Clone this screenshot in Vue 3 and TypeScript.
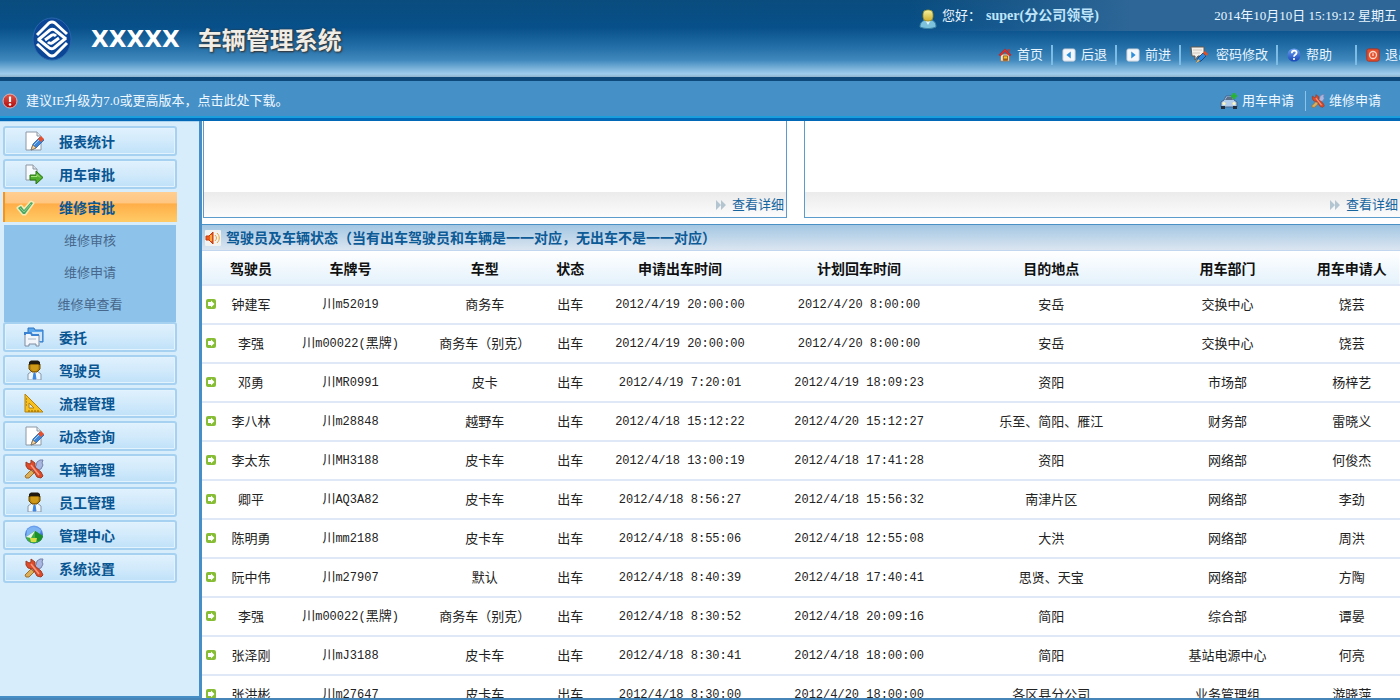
<script setup lang="ts">
interface MenuItem {
  label: string
  icon: string
  children?: string[]
}

const menu: MenuItem[] = [
  { label: '报表统计', icon: 'note' },
  { label: '用车审批', icon: 'export' },
  { label: '维修审批', icon: 'check', children: ['维修审核', '维修申请', '维修单查看'] },
  { label: '委托', icon: 'folders' },
  { label: '驾驶员', icon: 'person' },
  { label: '流程管理', icon: 'ruler' },
  { label: '动态查询', icon: 'note' },
  { label: '车辆管理', icon: 'tools' },
  { label: '员工管理', icon: 'person' },
  { label: '管理中心', icon: 'globe' },
  { label: '系统设置', icon: 'tools' },
]

const nav = [
  { label: '首页', icon: 'home' },
  { label: '后退', icon: 'back' },
  { label: '前进', icon: 'forward' },
  { label: '密码修改', icon: 'password', kind: 'wide' },
  { label: '帮助', icon: 'help', kind: 'spaced' },
  { label: '退出', icon: 'exit' },
]

const columns = ['驾驶员', '车牌号', '车型', '状态', '申请出车时间', '计划回车时间', '目的地点', '用车部门', '用车申请人']

const rows: string[][] = [
  ['钟建军', '川m52019', '商务车', '出车', '2012/4/19 20:00:00', '2012/4/20 8:00:00', '安岳', '交换中心', '饶芸'],
  ['李强', '川m00022(黑牌)', '商务车（别克）', '出车', '2012/4/19 20:00:00', '2012/4/20 8:00:00', '安岳', '交换中心', '饶芸'],
  ['邓勇', '川MR0991', '皮卡', '出车', '2012/4/19 7:20:01', '2012/4/19 18:09:23', '资阳', '市场部', '杨梓艺'],
  ['李八林', '川m28848', '越野车', '出车', '2012/4/18 15:12:22', '2012/4/20 15:12:27', '乐至、简阳、雁江', '财务部', '雷晓义'],
  ['李太东', '川MH3188', '皮卡车', '出车', '2012/4/18 13:00:19', '2012/4/18 17:41:28', '资阳', '网络部', '何俊杰'],
  ['卿平', '川AQ3A82', '皮卡车', '出车', '2012/4/18 8:56:27', '2012/4/18 15:56:32', '南津片区', '网络部', '李劲'],
  ['陈明勇', '川mm2188', '皮卡车', '出车', '2012/4/18 8:55:06', '2012/4/18 12:55:08', '大洪', '网络部', '周洪'],
  ['阮中伟', '川m27907', '默认', '出车', '2012/4/18 8:40:39', '2012/4/18 17:40:41', '思贤、天宝', '网络部', '方陶'],
  ['李强', '川m00022(黑牌)', '商务车（别克）', '出车', '2012/4/18 8:30:52', '2012/4/18 20:09:16', '简阳', '综合部', '谭晏'],
  ['张泽刚', '川mJ3188', '皮卡车', '出车', '2012/4/18 8:30:41', '2012/4/18 18:00:00', '简阳', '基站电源中心', '何亮'],
  ['张洪彬', '川m27647', '皮卡车', '出车', '2012/4/18 8:30:00', '2012/4/20 18:00:00', '各区县分公司', '业务管理组', '游晓萍'],
]

// Splits a value into Latin and Chinese runs so each gets its own face and size.
const runs = (value: string): string[] => value.match(/[\x20-\x7e]+|[^\x20-\x7e]+/g) ?? []
const isLatin = (run: string): boolean => /^[\x20-\x7e]/.test(run)
</script>

<template>
  <svg class="sprite" aria-hidden="true">
    <defs>
      <linearGradient id="gold" x1="0" y1="0" x2="0" y2="1">
        <stop offset="0" stop-color="#f6f3a0" /><stop offset="1" stop-color="#cfae2c" />
      </linearGradient>
      <linearGradient id="blueball" x1="0" y1="0" x2="0" y2="1">
        <stop offset="0" stop-color="#6fa4f2" /><stop offset="1" stop-color="#1746b8" />
      </linearGradient>
      <linearGradient id="redball" x1="0" y1="0" x2="0" y2="1">
        <stop offset="0" stop-color="#e0584a" /><stop offset="1" stop-color="#b00a0a" />
      </linearGradient>
    </defs>
    <symbol id="note" viewBox="0 0 20 20">
      <path d="M2 1h11l4 4v14H2z" fill="#fff" stroke="#8d98a6" />
      <path d="M13 1v4h4" fill="#e3e8ee" stroke="#8d98a6" />
      <path d="M7 19l2-6 7-7 4 3-8 8z" fill="#3f86d8" stroke="#2a5fa8" stroke-width=".8" />
      <path d="M14 8l3-3 3 3-3 3z" fill="#e8502c" />
      <path d="M7 19l2-5 3 3z" fill="#f7d29a" stroke="#8b6a3a" stroke-width=".6" />
      <path d="M10 14l5-5" stroke="#a9d2f8" />
    </symbol>
    <symbol id="export" viewBox="0 0 20 20">
      <path d="M2 1h7l4 4v11H2z" fill="#f8fbfe" stroke="#8c96a2" />
      <path d="M9 1v4h4" fill="#dbe2ea" stroke="#8c96a2" />
      <path d="M6 11h6V7l7 6.500-7 6.500v-4H6z" fill="#4fae2c" stroke="#2a7414" />
      <path d="M7 12.500h6v-2l3 3" fill="none" stroke="#a6e27c" />
    </symbol>
    <symbol id="check" viewBox="0 0 20 20">
      <path d="M3 11l3-2 3 4 7-8 2 1-8 11H8z" fill="#4ea865" stroke="#f3ecb4" stroke-width="3" stroke-linejoin="round" paint-order="stroke" />
      <path d="M5 11l4 4 7-8" fill="none" stroke="#86cf90" />
    </symbol>
    <symbol id="folders" viewBox="0 0 20 20">
      <path d="M4 13V1h6l1 2h8v12h-3" fill="#5aa9ee" stroke="#2f74c4" />
      <path d="M5 5h13v9H5z" fill="#cfe6fa" />
      <path d="M1 18V6h6l1 2h7v11h-3v-2H5v2H1z" fill="#f2f5f9" stroke="#7f8da0" />
      <path d="M1 8V6h6l1 2h7" fill="none" stroke="#3b83d2" stroke-width="2" />
      <path d="M4 12h8" stroke="#a8b8ca" />
    </symbol>
    <symbol id="person" viewBox="0 0 20 20">
      <path d="M4 20v-6l4-3h5l4 3v6z" fill="#eef6ff" stroke="#8798ab" />
      <path d="M10 13h1l1 6H9z" fill="#3c86dd" stroke="#3c86dd" />
      <path d="M5 4h11v5l-3 3H8L5 9z" fill="#b98408" stroke="#6d4a04" />
      <path d="M7 5h7v4l-2 2H9L7 9z" fill="#cf9a18" />
      <path d="M5 5V2l2-1.500h7L16 2v3l-2-1H7z" fill="#211a10" />
    </symbol>
    <symbol id="ruler" viewBox="0 0 20 20">
      <path d="M1 1l18 18H1z" fill="#f6c11f" stroke="#b6800e" />
      <path d="M5 10l5 5H5z" fill="#d5ebfb" stroke="#b6800e" />
      <path d="M5 17v2M8 17v2M11 17v2M14 17v2M2 6h1M2 9h1M2 12h1" stroke="#8d6207" />
    </symbol>
    <symbol id="tools" viewBox="0 0 20 20">
      <path d="M5 14l7-7 1-4 3-2h3l-1 3 1 2-2 4-4 1-6 6z" fill="#a9b6e0" stroke="#7482ad" />
      <path d="M1 17l6-6 3 3-5 5H2z" fill="#dcb05a" stroke="#a06f2a" />
      <path d="M2 3l3 2 2-1V1l4 3v4l6 5 2 4-2 2-4-1-4-7-5-1-2-3z" fill="#dc4c2c" stroke="#a03a22" />
      <path d="M7 6l8 10" stroke="#f79a80" stroke-width="1.500" />
    </symbol>
    <symbol id="globe" viewBox="0 0 20 20">
      <circle cx="10" cy="9.500" r="9" fill="url(#blueball)" />
      <path d="M3 5c3-4 10-4 14 0l-1 4-5-3-9 6z" fill="#7db4f4" />
      <path d="M2 12l9-6 8 5c-1 4-4 7-9 7-4 0-7-2-8-6z" fill="#3fae3a" />
      <path d="M2 12l9-6-4 7z" fill="#e6f5ea" />
      <path d="M11 6l8 5c-1 4-3 5-5 6l-3-5z" fill="#1e8f2d" />
      <path d="M6 13h7l-1 4H7z" fill="#d9dc44" />
    </symbol>
    <symbol id="user" viewBox="0 0 18 20">
      <path d="M1 18c0-5 3-6 5-7h6c3 1 5 2 5 7-5 2-11 2-16 0z" fill="#7cc2dd" stroke="#3c83a6" />
      <path d="M6 11l3 5 3-5z" fill="#dff6ff" />
      <rect x="4" y="1" width="10" height="11" rx="4" fill="url(#gold)" stroke="#8f8a2c" stroke-width=".8" />
    </symbol>
    <symbol id="home" viewBox="0 0 16 16">
      <path d="M3 7h10v8H3z" fill="#f7f1e6" stroke="#8b7762" />
      <path d="M1 8l7-7 7 7-2 1-5-5-5 5z" fill="#e02f2a" stroke="#b52420" stroke-width=".7" />
      <path d="M11 1h2v4l-2-2z" fill="#c9372b" />
      <path d="M6 9h5v5H6z" fill="#f7c22a" stroke="#8d4c10" />
      <path d="M6 12h5v2H6z" fill="#a45a12" />
    </symbol>
    <symbol id="back" viewBox="0 0 16 16">
      <rect x="1" y="1" width="14" height="14" rx="2" fill="#f4f8fc" stroke="#bcc8d4" />
      <path d="M10 4v8L5 8z" fill="#2c8fdc" />
    </symbol>
    <symbol id="forward" viewBox="0 0 16 16">
      <rect x="1" y="1" width="14" height="14" rx="2" fill="#f4f8fc" stroke="#bcc8d4" />
      <path d="M6 4v8l5-4z" fill="#2c8fdc" />
    </symbol>
    <symbol id="password" viewBox="0 0 18 18">
      <path d="M1 1h13v9H8l-3 4v-4H2z" fill="#f3f0ea" stroke="#64594f" />
      <path d="M3 4h9M3 7h7" stroke="#cfc6bc" />
      <path d="M7 16l1-4 5-5 3 3-5 5z" fill="#2b86dc" stroke="#123a70" stroke-width=".8" />
      <path d="M13 7l2-2 3 3-2 2z" fill="#e24f22" />
      <path d="M6 17l2-4 2 2z" fill="#f1b658" />
    </symbol>
    <symbol id="help" viewBox="0 0 16 16">
      <circle cx="8" cy="8" r="7.500" fill="url(#blueball)" />
      <path d="M5.500 6c0-4 5.500-3.500 5.500-.5C11 8 8 7.500 8 10" fill="none" stroke="#fff" stroke-width="2" />
      <circle cx="8" cy="12.500" r="1.200" fill="#fff" />
    </symbol>
    <symbol id="exit" viewBox="0 0 16 16">
      <rect x="1" y="1" width="14" height="14" rx="2" fill="#e5502f" stroke="#b52d15" />
      <circle cx="8" cy="8" r="4" fill="none" stroke="#ffd9cb" stroke-width="1.500" />
      <path d="M8 6v3" stroke="#ffd9cb" stroke-width="1.500" />
    </symbol>
    <symbol id="warning" viewBox="0 0 16 16">
      <circle cx="8" cy="8" r="7" fill="url(#redball)" stroke="#d9b4b8" />
      <path d="M8 3.500v5.500" stroke="#fff" stroke-width="2.200" />
      <circle cx="8" cy="11.500" r="1.300" fill="#fff" />
    </symbol>
    <symbol id="car" viewBox="0 0 18 18">
      <path d="M1 10l3-2 2-4h6l2 4 3 2v5H1z" fill="#b3cdec" stroke="#43648f" />
      <path d="M5 8l2-3h5l1 3z" fill="#5c6f88" />
      <path d="M1 14h4v3H1zM13 14h4v3h-4z" fill="#26303c" />
      <circle cx="4" cy="11.500" r="1.500" fill="#fff6b8" /><circle cx="14" cy="11.500" r="1.500" fill="#fff6b8" />
      <path d="M14 1v6M11 4h6" stroke="#27b52f" stroke-width="2.500" />
    </symbol>
    <symbol id="speaker" viewBox="0 0 16 16">
      <rect width="16" height="16" rx="1" fill="#f2f2f0" />
      <path d="M1 6h3l4-4v12l-4-4H1z" fill="#ee5a1c" stroke="#c23a0c" />
      <path d="M6 5v6" stroke="#ffa53a" stroke-width="2" />
      <path d="M10 5c2 2 2 4 0 6M12 3c3 3 3 7 0 10" fill="none" stroke="#eaa63a" />
    </symbol>
    <symbol id="arrow" viewBox="0 0 10 10">
      <rect width="10" height="10" rx="2" fill="#86bd34" />
      <path d="M2 3h3V1.500L8.500 5 5 8.500V7H2z" fill="#fff" />
    </symbol>
    <symbol id="more" viewBox="0 0 10 10">
      <path d="M0 0l5 5-5 5zM5 0l5 5-5 5z" fill="#b4c5d2" />
    </symbol>
  </svg>

  <div class="page">
    <header class="top">
      <div class="brand">
        <svg class="logo" viewBox="0 0 40 44" aria-hidden="true">
          <ellipse cx="20" cy="22" rx="19" ry="21" fill="#0b4596" stroke="#2a66ac" />
          <g fill="none" stroke="#fff" stroke-width="3" stroke-linejoin="round">
            <path d="M5 18L17 6q3-2 6 0l12 11" />
            <path d="M6 23l12-10q3-2 6 1l10 8" />
            <path d="M13 23l7-5q2-1 4 1" />
            <path d="M27 21l-7 5q-2 1-4-1" />
            <path d="M34 21L22 31q-3 2-6-1L6 22" />
            <path d="M35 26L23 38q-3 2-6 0L5 27" />
          </g>
        </svg>
        <h1><span class="code">XXXXX</span><span class="name">车辆管理系统</span></h1>
      </div>
      <div class="top-right">
        <div class="user-bar">
          <svg class="user-icon" aria-hidden="true"><use href="#user" /></svg>
          <span>您好：</span>
          <b>super(分公司领导)</b>
          <time>2014年10月10日 15:19:12 星期五</time>
        </div>
        <nav class="nav">
          <a v-for="n in nav" :key="n.label" href="#" :class="n.kind">
            <svg aria-hidden="true"><use :href="'#' + n.icon" /></svg>{{ n.label }}
          </a>
        </nav>
      </div>
    </header>

    <div class="notice">
      <svg class="warning" aria-hidden="true"><use href="#warning" /></svg>
      <a href="#">建议IE升级为7.0或更高版本，点击此处下载。</a>
      <div class="quick">
        <a href="#"><svg aria-hidden="true"><use href="#car" /></svg>用车申请</a>
        <a href="#"><svg aria-hidden="true"><use href="#tools" /></svg>维修申请</a>
      </div>
    </div>

    <div class="body">
      <aside class="side">
        <template v-for="m in menu" :key="m.label">
          <button type="button" :class="['item', { active: m.children }]">
            <svg aria-hidden="true"><use :href="'#' + m.icon" /></svg>{{ m.label }}
          </button>
          <div v-if="m.children" class="sub">
            <a v-for="c in m.children" :key="c" href="#">{{ c }}</a>
          </div>
        </template>
      </aside>

      <main class="main">
        <div class="panels">
          <section v-for="p in 2" :key="p" class="panel">
            <div class="panel-foot">
              <a href="#"><svg aria-hidden="true"><use href="#more" /></svg>查看详细</a>
            </div>
          </section>
        </div>

        <h2 class="title">
          <svg aria-hidden="true"><use href="#speaker" /></svg>驾驶员及车辆状态（当有出车驾驶员和车辆是一一对应，无出车不是一一对应）
        </h2>
        <table>
          <colgroup>
            <col class="c-mark" /><col class="c-driver" /><col class="c-plate" /><col class="c-type" /><col class="c-state" />
            <col class="c-out" /><col class="c-back" /><col class="c-place" /><col class="c-dept" /><col />
          </colgroup>
          <thead>
            <tr>
              <th></th>
              <th v-for="c in columns" :key="c" scope="col">{{ c }}</th>
            </tr>
          </thead>
          <tbody>
            <tr v-for="(row, i) in rows" :key="i">
              <td><svg class="mark" aria-hidden="true"><use href="#arrow" /></svg></td>
              <td v-for="(cell, j) in row" :key="j"><span v-for="(r, k) in runs(cell)" :key="k" :class="{ latin: isLatin(r) }">{{ r }}</span></td>
            </tr>
          </tbody>
        </table>
      </main>
    </div>
  </div>
</template>

<style>
body {
  overflow: hidden;
}
</style>

<style scoped>
.sprite {
  position: absolute;
  width: 0;
  height: 0;
}
.page {
  display: flex;
  flex-direction: column;
  height: 100vh;
  overflow: hidden;
  font: 13px/20px "Liberation Serif", "Noto Sans CJK SC", sans-serif;
  color: #222;
  background: #fff;
}
a {
  color: inherit;
  text-decoration: none;
}
svg {
  flex: none;
}
.top {
  display: flex;
  justify-content: space-between;
  height: 77px;
  flex: none;
  overflow: hidden;
  border-bottom: 4px solid #0d4a7b;
  background: linear-gradient(#0a4c7d, #07508a 36%, #2570a8 62%, #3f88bd 78%, #a0cdec 96%, #8fb3cc);
}
.brand {
  display: flex;
  align-items: center;
  padding-left: 32px;
}
.logo {
  width: 40px;
  height: 44px;
}
h1 {
  display: flex;
  align-items: center;
  gap: 18px;
  margin: 0 0 0 19px;
  font-size: 24px;
  line-height: 32px;
  color: #fff;
}
.code {
  font-family: "DejaVu Sans", sans-serif;
  font-size: 23px;
}
.name {
  font-family: "Noto Sans CJK SC", sans-serif;
  color: #f0ece6;
  text-shadow: 1px 1px 2px #333, 0 0 2px #333;
}
.top-right {
  display: flex;
  flex-direction: column;
  align-items: flex-end;
  width: 35%;
  color: #e8f5ff;
}
.user-bar {
  display: flex;
  align-items: center;
  box-sizing: border-box;
  width: 100%;
  height: 31px;
  padding: 0 3px 0 9px;
  background: linear-gradient(90deg, #2d669700, #2d6697 45%);
}
.user-icon {
  width: 18px;
  height: 20px;
  margin: 6px 5px 0 0;
}
.user-bar b {
  margin-left: 5px;
  font-size: 14px;
  color: #bfe5fb;
}
.user-bar time {
  margin-left: auto;
  white-space: nowrap;
}
.nav {
  display: flex;
  margin: 14px -11px 0 0;
}
.nav a {
  display: flex;
  align-items: center;
  gap: 5px;
  padding: 0 8px 0 9px;
  border-right: 2px solid #7dbce4;
  white-space: nowrap;
}
.nav a:last-child {
  padding-right: 0;
  border: 0;
}
.nav svg {
  width: 14px;
  height: 14px;
}
.nav .wide {
  gap: 8px;
  padding-right: 8px;
}
.nav .wide svg {
  width: 18px;
  height: 18px;
}
.nav .spaced {
  padding-right: 23px;
}
.notice {
  display: flex;
  align-items: center;
  box-sizing: border-box;
  flex: none;
  height: 37px;
  padding: 4px 19px 0 2px;
  border-bottom: 2px solid #1a9fdc;
  background: #4690c8;
  color: #eef8ff;
}
.warning {
  width: 16px;
  height: 16px;
  margin-right: 8px;
}
.quick {
  display: flex;
  margin-left: auto;
}
.quick a {
  display: flex;
  align-items: center;
  gap: 4px;
}
.quick a + a {
  margin-left: 11px;
  padding-left: 5px;
  border-left: 1px solid #8cc3ea;
}
.quick svg {
  width: 18px;
  height: 18px;
}
.quick a + a svg {
  width: 14px;
  height: 14px;
}
.body {
  display: flex;
  flex: 1;
  min-height: 0;
  border-top: 3px solid #0068b7;
  border-bottom: 2px solid #4585b8;
}
.side {
  box-sizing: border-box;
  flex: none;
  width: 202px;
  padding: 5px 22px 0 3px;
  border-right: 3px solid #458fc6;
  border-bottom: 2px solid #458fc6;
  background: #d7edfb;
  box-shadow: inset 0 1px #a9d3ee;
}
.item {
  display: flex;
  align-items: center;
  gap: 15px;
  box-sizing: border-box;
  width: 174px;
  height: 30px;
  margin: 0 0 3px;
  padding: 0 0 1px 19px;
  border: 2px solid #a6d1f1;
  border-radius: 3px;
  background: linear-gradient(#e0f1fd, #d2eafb 50%, #bfe1f9);
  box-shadow: inset 0 0 0 1px #e2f3fe;
  font: bold 14px/20px "Noto Sans CJK SC", sans-serif;
  color: #0a5692;
}
.item svg {
  width: 20px;
  height: 20px;
}
.item.active {
  gap: 24px;
  padding-left: 10px;
  border: 0;
  border-left: 2px solid #f7941d;
  border-radius: 0;
  background: linear-gradient(#ffce92, #ffc681 36%, #ffae48 40%, #ffcb66);
  box-shadow: none;
}
.sub {
  display: flex;
  flex-direction: column;
  width: 172px;
  margin-left: 1px;
  padding-bottom: 1px;
  background: #8dc3ea;
  text-align: center;
  line-height: 32px;
  color: #48678c;
}
.main {
  flex: 1;
  min-width: 0;
  overflow: hidden;
}
.panels {
  display: grid;
  grid-template-columns: 49fr 50fr;
  gap: 17px;
  margin: 0 0 6px 1px;
}
.panel {
  padding-top: 71px;
  border: 1px solid #5b9ccc;
  border-top: 0;
}
.panel:last-child {
  border-right: 0;
}
.panel-foot {
  display: flex;
  justify-content: flex-end;
  height: 25px;
  padding-right: 2px;
  background: linear-gradient(#ebebeb, #fcfcfc);
  line-height: 25px;
  color: #16659f;
}
.panel-foot a {
  display: flex;
  align-items: center;
  gap: 6px;
}
.panel-foot svg {
  width: 10px;
  height: 10px;
}
.title {
  display: flex;
  align-items: center;
  gap: 5px;
  height: 25px;
  margin: 0;
  padding-left: 3px;
  border-top: 1px solid #4a91c6;
  border-bottom: 1px solid #c3d6f0;
  background: linear-gradient(#a3c7e3, #dbe5f0);
  font: bold 14px/25px "Noto Sans CJK SC", sans-serif;
  color: #0c5a96;
  white-space: nowrap;
}
.title svg {
  width: 16px;
  height: 16px;
}
table {
  width: 100%;
  table-layout: fixed;
  border-collapse: separate;
  border-spacing: 0;
  text-align: center;
  white-space: nowrap;
}
.c-mark { width: 1.5%; }
.c-driver { width: 5.2%; }
.c-plate { width: 11.4%; }
.c-type { width: 11%; }
.c-state { width: 3.3%; }
.c-out { width: 15%; }
.c-back { width: 14.9%; }
.c-place { width: 17.2%; }
.c-dept { width: 12.2%; }
th,
td {
  box-sizing: border-box;
  padding: 0;
  border-bottom: 2px solid #dfe8f7;
}
th {
  height: 35px;
  font: bold 14px/20px "Noto Sans CJK SC", sans-serif;
  color: #111;
}
thead tr {
  background: linear-gradient(#fff, #e3f1fb);
}
td {
  height: 39px;
  padding-bottom: 2px;
  font-family: "Noto Sans CJK SC", sans-serif;
}
th:last-child,
td:last-child {
  padding-left: 3px;
}
.latin {
  font-family: "Liberation Mono", monospace;
  font-size: 12px;
}
.mark {
  display: block;
  width: 10px;
  height: 10px;
  margin: 0 auto;
}
</style>
